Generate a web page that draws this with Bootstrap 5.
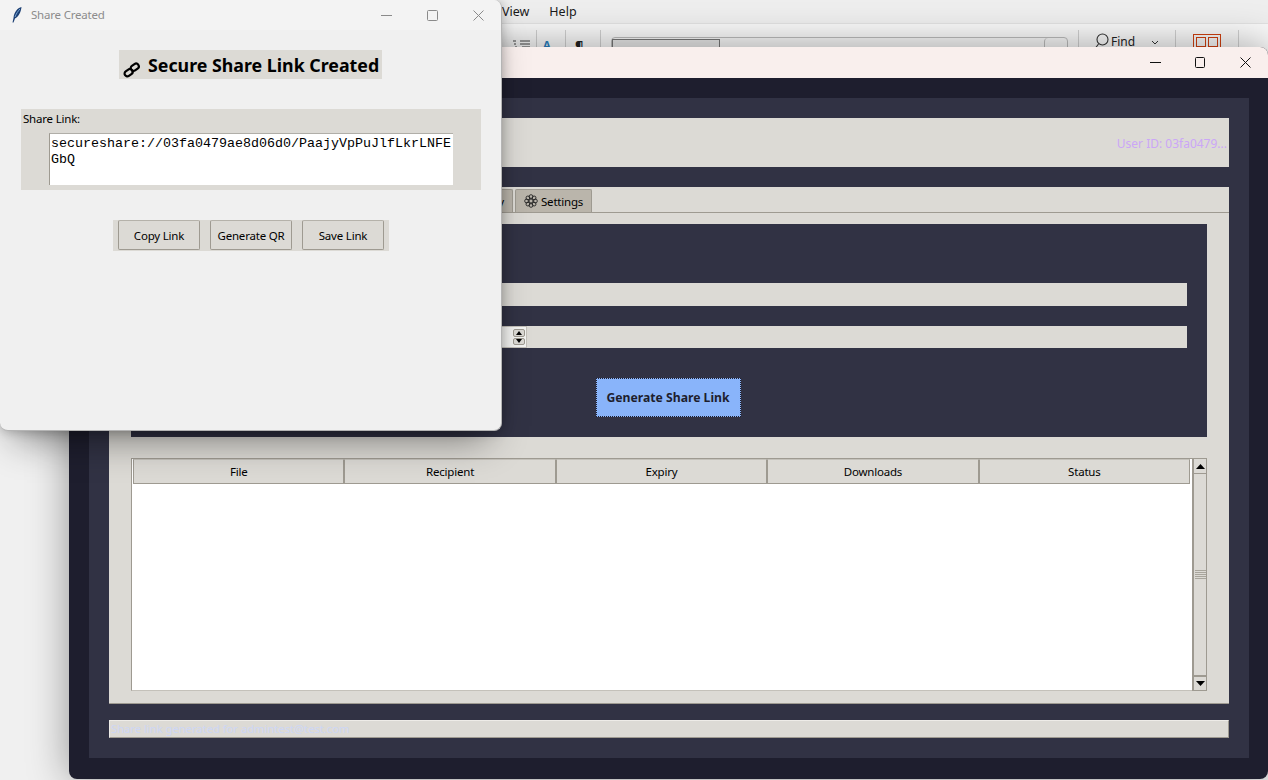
<!DOCTYPE html>
<html lang="en">
<head>
    <meta charset="UTF-8">
    <title>Share Created</title>
    <link href="https://cdn.jsdelivr.net/npm/bootstrap@5.3.0/dist/css/bootstrap.min.css" rel="stylesheet">
    <style>
        html, body { height: 100%; }
        body { margin: 0; overflow: hidden; background: #f0f0f0; font-family: "Noto Sans", "Open Sans", sans-serif; font-size: 11.5px; letter-spacing: -.2px; line-height: 16px; color: #000; }
        .desk { position: relative; width: 1268px; height: 780px; overflow: hidden; }

        /* editor window sitting behind everything */
        .editor { position: absolute; left: 0; top: 0; width: 1268px; height: 60px; background: #f9f9f9; }
        .editor-menu { height: 24px; background: #eeeeee; border-bottom: 1px solid #e2e2e2; padding-left: 502px; gap: 20px; font-size: 12.5px; letter-spacing: 0; line-height: 23px; color: #1a1a1a; }
        .editor-tools { height: 36px; padding-left: 513px; color: #222; }
        .tool-sep { width: 1px; height: 20px; background: #d0d0d0; margin-top: 6px; flex-shrink: 0; }
        .tool-lines { width: 23px; margin-top: 14px; }
        .tool-a { width: 28px; padding-left: 6px; color: #2a7fc0; font-weight: 700; font-size: 11px; line-height: 20px; padding-top: 11px; }
        .tool-pil { width: 34px; padding-left: 9px; font-size: 13px; font-weight: 700; line-height: 20px; padding-top: 12px; }
        .find-box { width: 457px; height: 20px; margin: 13px 10px 0 10px; border: 1px solid #bcbcbc; border-radius: 4px; background: #f7f7f7; flex-shrink: 0; }
        .find-inner { width: 108px; height: 14px; margin-top: 1px; border: 1px solid #777; border-bottom: 0; background: #e8e8e8; }
        .find-drop { width: 23px; margin-left: auto; border-left: 1px solid #bcbcbc; border-radius: 4px; }
        .find-icon { margin: 9px 0 0 13px; }
        .find-label { font-size: 12px; letter-spacing: 0; line-height: 18px; margin: 9px 0 0 1px; width: 40px; }
        .find-chev { margin: 16px 16px 0 0; }
        .orange-box { width: 28px; height: 16px; border: 1px solid #d04010; margin: 10px 17px 0 17px; padding: 2px; gap: 2px; }
        .orange-box i { flex: 1; border: 1px solid #d04010; }

        /* main window */
        .app-win { position: absolute; left: 69px; top: 47px; width: 1199px; height: 732px; background: #1e1e2e; border-radius: 8px; box-shadow: 0 0 40px rgba(0,0,0,.38); overflow: hidden; }
        .app-title { height: 31px; background: #f9efed; }
        .win-ctl { width: 45px; height: 31px; }
        .app-body { padding: 20px 19px 21px 20px; }
        .app-inner { background: #313244; padding: 20px; height: 660px; }
        .clam-bg { background: #dcdad5; }
        .top-strip { height: 49px; padding: 0 2px 0 0; color: #cba6f7; font-size: 12px; letter-spacing: 0; }
        .top-strip span { margin-top: 3px; }
        .tab-strip { margin-top: 20px; height: 25px; padding: 2px 0 0 0; }
        .clam-tab { background: #bab5ab; border: 1px solid #9e9a91; border-bottom: 0; border-radius: 2px 2px 0 0; height: 23px; line-height: 23px; margin-right: 2px; padding: 0 8px; white-space: nowrap; }
        .tab-first { width: 404px; text-align: right; }
        .tab-gear { margin-right: 3px; }
        .note-pane { height: 492px; border-top: 1px solid #9e9a91; border-bottom: 1px solid #9e9a91; padding: 11px 22px 0; }
        .dark-panel { background: #313244; height: 213px; padding: 59px 20px 0; }
        .fld { height: 23px; }
        .fld-spin { height: 22px; margin-top: 20px; }
        .spin-box { width: 376px; height: 22px; background: #f4f4f2; border: 1px solid #c4c1ba; border-left: 0; padding: 2px 1px; }
        .spin-btns { width: 12px; margin-left: auto; gap: 1px; }
        .spin-btn { flex: 1; background: #dcdad5; border: 1px solid #9e9a91; border-radius: 2px; }
        .gen-wrap { margin-top: 30px; padding-right: 2px; }
        .gen-btn { width: 145px; height: 39px; background: #89b4fa; border: 1px dotted #1e1e2e; border-radius: 0; padding: 1px 0 0; color: #1e1e2e; font-weight: 700; font-size: 12.2px; letter-spacing: 0; line-height: 36px; }
        .tree-row { margin-top: 21px; height: 233px; }
        .tree { flex: 1; background: #fff; border: 1px solid #9e9a91; border-right: 0; border-bottom-color: #c4c1ba; }
        .tree-head { height: 26px; padding: 0 2px 0 1px; background: #fff; }
        .tree-col { flex: 1; height: 25px; line-height: 23px; text-align: center; background: #dcdad5; border: 1px solid #9e9a91; border-top-color: #c4c1ba; }
        .scroll-track { width: 15px; background: #dcdad5; border: 1px solid #9e9a91; border-left-width: 2px; }
        .scroll-arrow { height: 15px; background: #dcdad5; border-bottom: 1px solid #9e9a91; }
        .scroll-arrow.down { border-bottom: 0; border-top: 2px solid #9e9a91; }
        .scroll-thumb { flex: 1; gap: 1px; }
        .scroll-thumb i { width: 11px; height: 1px; background: #a8a59c; }
        .status-strip { margin-top: 16px; height: 18px; border: 1px solid #9e9a91; border-top-color: #eeece8; border-left-color: #eeece8; color: #cdd6f4; line-height: 16px; padding-left: 1px; font-size: 11.2px; letter-spacing: 0; }

        /* dialog */
        .dlg { position: absolute; left: 0; top: 0; width: 502px; height: 431px; background: #f0f0f0; border: 1px solid #b4b4b4; border-top: 0; border-left: 0; border-radius: 0 8px 8px 8px; box-shadow: 0 22px 36px -14px rgba(0,0,0,.45), 0 0 12px rgba(0,0,0,.25); overflow: hidden; }
        .dlg .win-ctl { width: 46px; }
        .dlg-title { height: 30px; background: #f3f3f3; color: #8c8c8c; padding-left: 12px; }
        .dlg-title span { margin-left: 9px; margin-top: -1px; }
        .dlg-heading { height: 29px; margin: 20px 0 0 119px; width: 263px; padding-left: 4px; }
        .dlg-heading svg { margin-top: 12px; }
        .dlg-heading h1 { font-size: 17.8px; letter-spacing: 0; line-height: 31px; margin: 0 0 0 8px; font-weight: 700; white-space: nowrap; }
        .share-panel { margin: 30px 20px 0 21px; height: 81px; padding: 0 28px 0 2px; }
        .share-label { line-height: 17px; height: 24px; padding-top: 1px; }
        .share-text { margin-left: 26px; height: 52px; width: 404px; background: #fff; border-left: 1px solid #9e9a91; border-top: 1px solid #b0aea8; padding: 2px 0 0 1px; font-family: "Liberation Mono", monospace; font-size: 13.33px; letter-spacing: 0; line-height: 16px; word-break: break-all; color: #000; }
        .btn-strip { margin: 30px 0 0 113px; width: 276px; height: 31px; padding: 0 5px; gap: 10px; }
        .clam-btn { width: 82px; height: 30px; padding: 0; background: #dcdad5; border: 1px solid #9e9a91; border-top-color: #b5b2aa; border-radius: 2px; font-size: 11.5px; letter-spacing: -.2px; line-height: 29px; color: #000; }
    </style>
</head>
<body>
<div class="desk">

    <div class="editor">
        <div class="editor-menu d-flex">
            <span>View</span>
            <span>Help</span>
        </div>
        <div class="editor-tools d-flex">
            <svg class="tool-lines" width="23" height="10" viewBox="0 0 23 10" fill="none" stroke="#444"><path d="M0 3h3M1 6h2M3 3h0M2 9h2M7 3h10M7 6h10M9 9h8"/></svg>
            <div class="tool-sep"></div>
            <span class="tool-a">A</span>
            <div class="tool-sep"></div>
            <span class="tool-pil">&para;</span>
            <div class="tool-sep"></div>
            <div class="find-box d-flex"><div class="find-inner"></div><div class="find-drop"></div></div>
            <div class="tool-sep"></div>
            <svg class="find-icon" width="18" height="20" viewBox="0 0 18 20" fill="none" stroke="#333" stroke-width="1.1"><circle cx="10.500" cy="6.500" r="5.500"/><path d="M6.500 11L0.500 19"/></svg>
            <span class="find-label">Find</span>
            <svg class="find-chev" width="8" height="6" viewBox="0 0 8 6" fill="none" stroke="#333"><path d="M1 1l3 3 3-3"/></svg>
            <div class="tool-sep"></div>
            <div class="orange-box d-flex"><i></i><i></i></div>
            <div class="tool-sep"></div>
        </div>
    </div>

    <div class="app-win">
        <div class="app-title d-flex justify-content-end">
            <div class="win-ctl d-flex align-items-center justify-content-center"><svg width="11" height="11" viewBox="0 0 11 11" stroke="#111" fill="none"><path d="M0 5.500h11"/></svg></div>
            <div class="win-ctl d-flex align-items-center justify-content-center"><svg width="11" height="11" viewBox="0 0 11 11" stroke="#111" fill="none"><rect x=".5" y=".5" width="9" height="10" rx="1"/></svg></div>
            <div class="win-ctl d-flex align-items-center justify-content-center"><svg width="11" height="11" viewBox="0 0 11 11" stroke="#111" fill="none"><path d="M.5.5l10 10M10.500.5l-10 10"/></svg></div>
        </div>
        <div class="app-body">
            <div class="app-inner">
                <div class="top-strip clam-bg d-flex align-items-center justify-content-end">
                    <span>User ID: 03fa0479...</span>
                </div>
                <div class="tab-strip clam-bg d-flex">
                    <div class="clam-tab tab-first">Activity</div>
                    <div class="clam-tab d-flex align-items-center">
                        <svg class="tab-gear" width="14" height="14" viewBox="0 0 14 14" fill="none" stroke="#222" stroke-width=".9"><circle cx="7" cy="7" r="2"/><circle cx="7" cy="2.600" r="1.900"/><circle cx="7" cy="11.400" r="1.900"/><circle cx="2.600" cy="7" r="1.900"/><circle cx="11.400" cy="7" r="1.900"/><circle cx="3.900" cy="3.900" r="1.900"/><circle cx="10.100" cy="3.900" r="1.900"/><circle cx="3.900" cy="10.100" r="1.900"/><circle cx="10.100" cy="10.100" r="1.900"/></svg>
                        <span>Settings</span>
                    </div>
                </div>
                <div class="note-pane clam-bg">
                    <div class="dark-panel">
                        <div class="fld clam-bg"></div>
                        <div class="fld-spin clam-bg">
                            <div class="spin-box d-flex">
                                <div class="spin-btns d-flex flex-column">
                                    <div class="spin-btn d-flex align-items-center justify-content-center"><svg width="6" height="4" viewBox="0 0 6 4"><path d="M3 0l3 4H0z"/></svg></div>
                                    <div class="spin-btn d-flex align-items-center justify-content-center"><svg width="6" height="4" viewBox="0 0 6 4"><path d="M3 4L0 0h6z"/></svg></div>
                                </div>
                            </div>
                        </div>
                        <div class="gen-wrap text-center">
                            <button class="btn gen-btn" type="button">Generate Share Link</button>
                        </div>
                    </div>
                    <div class="tree-row d-flex">
                        <div class="tree">
                            <div class="tree-head d-flex">
                                <div class="tree-col">File</div>
                                <div class="tree-col">Recipient</div>
                                <div class="tree-col">Expiry</div>
                                <div class="tree-col">Downloads</div>
                                <div class="tree-col">Status</div>
                            </div>
                        </div>
                        <div class="scroll-track d-flex flex-column">
                            <div class="scroll-arrow d-flex align-items-center justify-content-center"><svg width="9" height="5" viewBox="0 0 9 5"><path d="M4.500 0l4.500 5H0z"/></svg></div>
                            <div class="scroll-thumb d-flex flex-column align-items-center justify-content-center">
                                <i></i><i></i><i></i><i></i><i></i>
                            </div>
                            <div class="scroll-arrow down d-flex align-items-center justify-content-center"><svg width="9" height="5" viewBox="0 0 9 5"><path d="M4.500 5L0 0h9z"/></svg></div>
                        </div>
                    </div>
                </div>
                <div class="status-strip clam-bg">Share link generated for admintest@test.com</div>
            </div>
        </div>
    </div>

    <div class="dlg">
        <div class="dlg-title d-flex align-items-center">
            <svg width="10" height="16" viewBox="0 0 10 16"><path d="M9.500 0C5.500 1 2 5 1.500 11L0.500 15.500h1L3 11.500C6.500 10 9 5 9.500 0z" fill="#1c3f73"/><path d="M8 2C6 4 4 7 3 10" stroke="#8fc0ee" stroke-width=".8" fill="none"/></svg>
            <span>Share Created</span>
            <div class="ms-auto d-flex">
                <div class="win-ctl d-flex align-items-center justify-content-center"><svg width="11" height="11" viewBox="0 0 11 11" stroke="#8a8a8a" fill="none"><path d="M0 5.500h11"/></svg></div>
                <div class="win-ctl d-flex align-items-center justify-content-center"><svg width="11" height="11" viewBox="0 0 11 11" stroke="#8a8a8a" fill="none"><rect x=".5" y=".5" width="10" height="10" rx="1"/></svg></div>
                <div class="win-ctl d-flex align-items-center justify-content-center"><svg width="11" height="11" viewBox="0 0 11 11" stroke="#8a8a8a" fill="none"><path d="M.5.5l10 10M10.500.5l-10 10"/></svg></div>
            </div>
        </div>
        <div class="dlg-heading clam-bg d-flex">
            <svg width="17" height="16" viewBox="0 0 17 16" class="flex-shrink-0" fill="none" stroke="#000" stroke-width="2.200"><rect x="1.300" y="8" width="8.500" height="5.500" rx="2.700" transform="rotate(-35 5.500 10.700)"/><rect x="7.500" y="2.500" width="8.500" height="5.500" rx="2.700" transform="rotate(-35 11.700 5.200)"/></svg>
            <h1>Secure Share Link Created</h1>
        </div>
        <div class="share-panel clam-bg">
            <div class="share-label">Share Link:</div>
            <div class="share-text">secureshare://03fa0479ae8d06d0/PaajyVpPuJlfLkrLNFEGbQ</div>
        </div>
        <div class="btn-strip clam-bg d-flex">
            <button class="btn clam-btn" type="button">Copy Link</button>
            <button class="btn clam-btn" type="button">Generate QR</button>
            <button class="btn clam-btn" type="button">Save Link</button>
        </div>
    </div>

</div>
<script src="https://cdn.jsdelivr.net/npm/bootstrap@5.3.0/dist/js/bootstrap.bundle.min.js"></script>
</body>
</html>
